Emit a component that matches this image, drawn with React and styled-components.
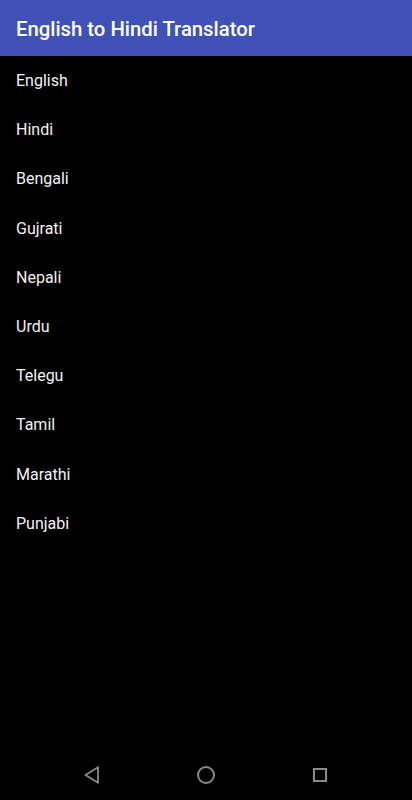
import styled, { createGlobalStyle } from "styled-components";

const languages = [
  "English",
  "Hindi",
  "Bengali",
  "Gujrati",
  "Nepali",
  "Urdu",
  "Telegu",
  "Tamil",
  "Marathi",
  "Punjabi",
];

export default function App() {
  return (
    <>
      <GlobalStyle />
      <Screen>
        <AppBar>
          <Title>English to Hindi Translator</Title>
        </AppBar>
        <List>
          {languages.map((name) => (
            <Item key={name}>{name}</Item>
          ))}
        </List>
        <NavBar>
          <NavButton>
            <svg width="16" height="18" viewBox="0 0 16 18">
              <path
                d="M14 1.2 L1.5 9 L14 16.8 Z"
                fill="none"
                stroke="#8a8a8a"
                strokeWidth="1.8"
                strokeLinejoin="round"
              />
            </svg>
          </NavButton>
          <NavButton>
            <svg width="20" height="20" viewBox="0 0 20 20">
              <circle cx="10" cy="10" r="8" fill="none" stroke="#8a8a8a" strokeWidth="2" />
            </svg>
          </NavButton>
          <NavButton>
            <svg width="16" height="16" viewBox="0 0 16 16">
              <rect x="2" y="2" width="12" height="12" fill="none" stroke="#8a8a8a" strokeWidth="2" />
            </svg>
          </NavButton>
        </NavBar>
      </Screen>
    </>
  );
}

const GlobalStyle = createGlobalStyle`
  body {
    margin: 0;
    background: #000;
    font-family: Roboto, "Liberation Sans", sans-serif;
  }
`;

const Screen = styled.div`
  width: 412px;
  height: 800px;
  display: flex;
  flex-direction: column;
  background: #000;
`;

const AppBar = styled.div`
  height: 56px;
  background: #3f51b5;
  display: flex;
  align-items: center;
  padding: 2px 16px 0;
  box-sizing: border-box;
`;

const Title = styled.div`
  color: #fff;
  font-size: 20.3px;
  font-weight: 500;
`;

const List = styled.div`
  flex: 1;
  display: flex;
  flex-direction: column;
`;

const Item = styled.div`
  height: 49.2px;
  flex-shrink: 0;
  display: flex;
  align-items: center;
  padding: 0 16px;
  color: #f2f2f2;
  font-size: 16px;
`;

const NavBar = styled.div`
  height: 50px;
  display: grid;
  grid-template-columns: repeat(3, 1fr);
  align-items: center;
  justify-items: center;
  padding: 0 35px;
`;

const NavButton = styled.div`
  display: flex;
  align-items: center;
  justify-content: center;
  width: 40px;
  height: 40px;
`;
